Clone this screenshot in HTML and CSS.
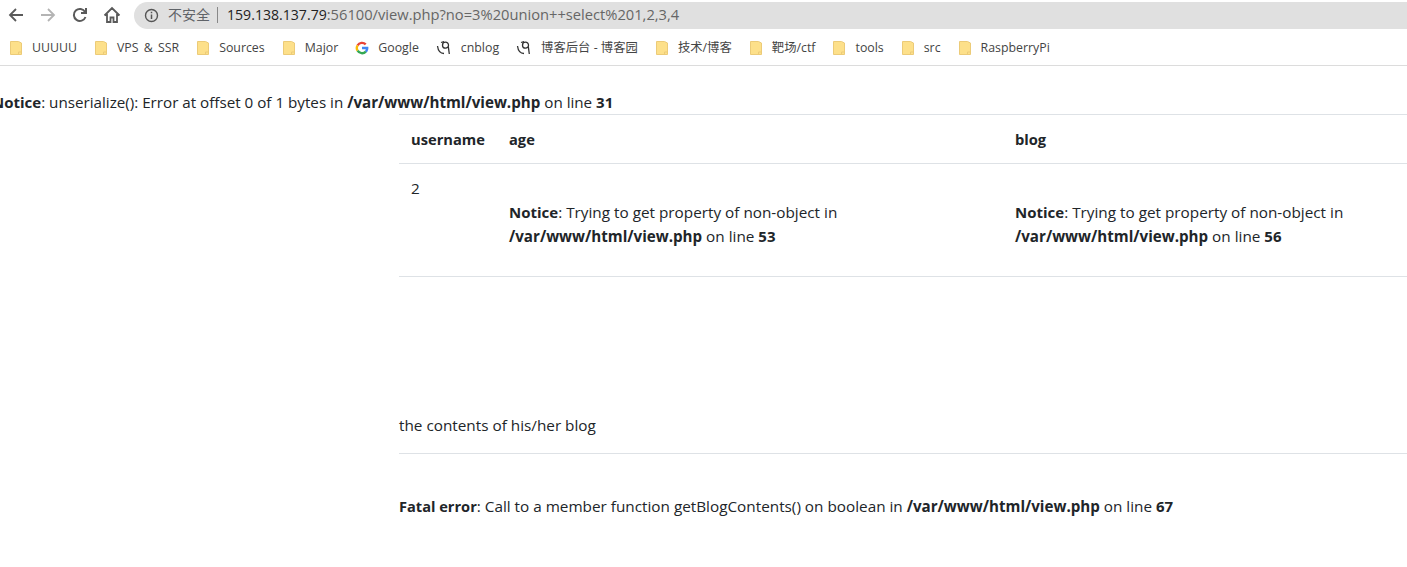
FILE: index.html
```html
<!DOCTYPE html>
<html lang="zh">
<head>
<meta charset="utf-8">
<title>view.php</title>
<link rel="stylesheet" href="styles.css">
</head>
<body>
<svg class="defs" width="0" height="0" aria-hidden="true">
  <symbol id="folder" viewBox="0 0 14 16">
    <path d="M1.500 1.500h8l3 1.500v11.500h-11z" fill="#fde08a" stroke="#eccb78" stroke-width="1"/>
    <path d="M9.500 14.500v-2.500h3" fill="none" stroke="#eccb78"/>
  </symbol>
  <symbol id="cnb" viewBox="0 0 16 16">
    <path d="M1.500 6c.5 4 2.500 7.500 6.500 7.500M6.500 5.200a3 3 0 1 1 6 0 3 3 0 1 1-6 0M5 2.500l3-1M12.300 6.500l1 7.500" fill="none" stroke="#333" stroke-width="1.300"/>
  </symbol>
</svg>
<header class="chrome">
  <div class="toolbar">
    <svg class="nav" width="16" height="16" viewBox="0 0 16 16"><path d="M15 8H2M8 2 2 8l6 6" fill="none" stroke="#5a5a5a" stroke-width="1.800"/></svg>
    <svg class="nav" width="16" height="16" viewBox="0 0 16 16"><path d="M1 8h13M8 2l6 6-6 6" fill="none" stroke="#b4b4b4" stroke-width="1.800"/></svg>
    <svg class="nav" width="16" height="16" viewBox="0 0 16 16"><path d="M13.500 10a6 6 0 1 1-.4-5M14 1v5H9" fill="none" stroke="#5a5a5a" stroke-width="2"/></svg>
    <svg class="nav nav-home" width="18" height="18" viewBox="0 0 18 18"><path d="M1.500 9.500 9 2l7.500 7.500M4 8v8h3.500v-4.500h3V16H14V8" fill="none" stroke="#5a5a5a" stroke-width="1.800"/></svg>
    <div class="omnibox">
      <svg width="15" height="15" viewBox="0 0 15 15"><circle cx="7.500" cy="7.500" r="6" fill="none" stroke="#555" stroke-width="1.400"/><path d="M7.500 6.500v4.500M7.500 3.700v1.600" stroke="#555" stroke-width="1.500"/></svg>
      <span class="insecure">不安全</span>
      <span class="sep"></span>
      <span class="url"><span class="host">159.138.137.79</span>:56100/view.php?no=3%20union++select%201,2,3,4</span>
    </div>
  </div>
  <nav class="bookmarks">
    <a class="mark"><svg width="14" height="16"><use href="#folder"/></svg>UUUUU</a>
    <a class="mark wide"><svg width="14" height="16"><use href="#folder"/></svg>VPS &amp; SSR</a>
    <a class="mark"><svg width="14" height="16"><use href="#folder"/></svg>Sources</a>
    <a class="mark"><svg width="14" height="16"><use href="#folder"/></svg>Major</a>
    <a class="mark"><svg width="14" height="14" viewBox="0 0 14 14"><path d="M7 5.800h6.300c.1.400.1.900.1 1.300 0 1.700-.6 3.200-1.600 4.300L9.800 9.900c.5-.5.800-1 1-1.700H7z" fill="#4285f4"/><path d="M2.600 4.300A5.200 5.200 0 0 1 10.700 3.400" fill="none" stroke="#ea4335" stroke-width="2.400"/><path d="M2.600 4.300A5.200 5.200 0 0 0 2.600 9.700" fill="none" stroke="#fbbc05" stroke-width="2.400"/><path d="M2.600 9.700A5.200 5.200 0 0 0 10.800 10.600" fill="none" stroke="#34a853" stroke-width="2.400"/></svg>Google</a>
    <a class="mark"><svg width="16" height="16"><use href="#cnb"/></svg>cnblog</a>
    <a class="mark"><svg width="16" height="16"><use href="#cnb"/></svg>博客后台 - 博客园</a>
    <a class="mark"><svg width="14" height="16"><use href="#folder"/></svg>技术/博客</a>
    <a class="mark"><svg width="14" height="16"><use href="#folder"/></svg>靶场/ctf</a>
    <a class="mark"><svg width="14" height="16"><use href="#folder"/></svg>tools</a>
    <a class="mark"><svg width="14" height="16"><use href="#folder"/></svg>src</a>
    <a class="mark"><svg width="14" height="16"><use href="#folder"/></svg>RaspberryPi</a>
  </nav>
</header>
<main class="page">
  <p class="notice"><b>Notice</b>: unserialize(): Error at offset 0 of 1 bytes in <b class="path">/var/www/html/view.php</b> on line <b>31</b></p>
  <div class="container">
    <table class="info">
      <thead>
        <tr><th class="c-user">username</th><th class="c-age">age</th><th>blog</th></tr>
      </thead>
      <tbody>
        <tr>
          <td>2</td>
          <td><br><b>Notice</b>: Trying to get property of non-object in <b class="path">/var/www/html/view.php</b> on line <b>53</b></td>
          <td><br><b>Notice</b>: Trying to get property of non-object in <b class="path">/var/www/html/view.php</b> on line <b>56</b></td>
        </tr>
      </tbody>
    </table>
    <p class="contents">the contents of his/her blog</p>
    <hr class="rule">
    <p class="fatal"><b class="label">Fatal error</b>: Call to a member function getBlogContents() on boolean in <b class="path">/var/www/html/view.php</b> on line <b>67</b></p>
  </div>
</main>
</body>
</html>
```

FILE: styles.css
```css
* { box-sizing: border-box; }
html, body { margin: 0; padding: 0; }
body {
  width: 1407px;
  height: 567px;
  overflow: hidden;
  background: #fff;
  color: #212529;
  font-family: "Open Sans", "Noto Sans CJK SC", sans-serif;
  font-size: 15.3px;
  line-height: 24px;
}
b { font-size: 15px; line-height: 1; }
.path { font-size: 15.15px; }
.label { font-size: 14.6px; }
.defs { position: absolute; }
.chrome { height: 66px; border-bottom: 1px solid #dcdcdc; }
.toolbar {
  height: 30px;
  display: flex;
  align-items: center;
  padding-left: 8px;
}
.nav { flex: none; margin-right: 16px; }
.nav-home { margin-right: 13px; margin-left: -1px; }
.omnibox {
  flex: 1;
  height: 27px;
  padding-left: 10px;
  display: flex;
  align-items: center;
  background: #e0e0e0;
  border-radius: 14px 0 0 14px;
  font-size: 14.7px;
}
.insecure { margin-left: 9px; color: #5f6368; font-size: 14px; }
.sep { width: 1px; height: 16px; background: #888; margin: 0 9px 0 7px; }
.url { color: #666; margin-top: -2px; }
.host { color: #222; font-size: 14.1px; }
.bookmarks {
  height: 35px;
  display: flex;
  align-items: center;
  padding-left: 9px;
  gap: 17px;
  font-size: 12.35px;
  color: #444;
}
.mark { display: flex; align-items: center; gap: 9px; white-space: nowrap; }
.wide { word-spacing: 2px; }
.page { position: relative; }
.notice { margin: 24px 0 0 -8px; height: 24px; white-space: nowrap; font-size: 15.2px; }
.container { margin-left: 399px; }
.info { width: 1008px; border-collapse: collapse; table-layout: fixed; }
.info th, .info td {
  padding: 12px;
  text-align: left;
  vertical-align: top;
  border-top: 1px solid #dee2e6;
}
.info td { padding-bottom: 28px; }
.info th { font-size: 14.7px; }
.info thead th { border-bottom: 1px solid #dee2e6; height: 49px; }
.info tbody tr { border-bottom: 1px solid #dee2e6; }
.c-user { width: 98px; }
.c-age { width: 506px; }
.contents { margin: 136px 0 0; }
.rule { margin: 16px 0 0; border: 0; border-top: 1px solid #dee2e6; }
.fatal { margin: 40px 0 0; white-space: nowrap; }
```
